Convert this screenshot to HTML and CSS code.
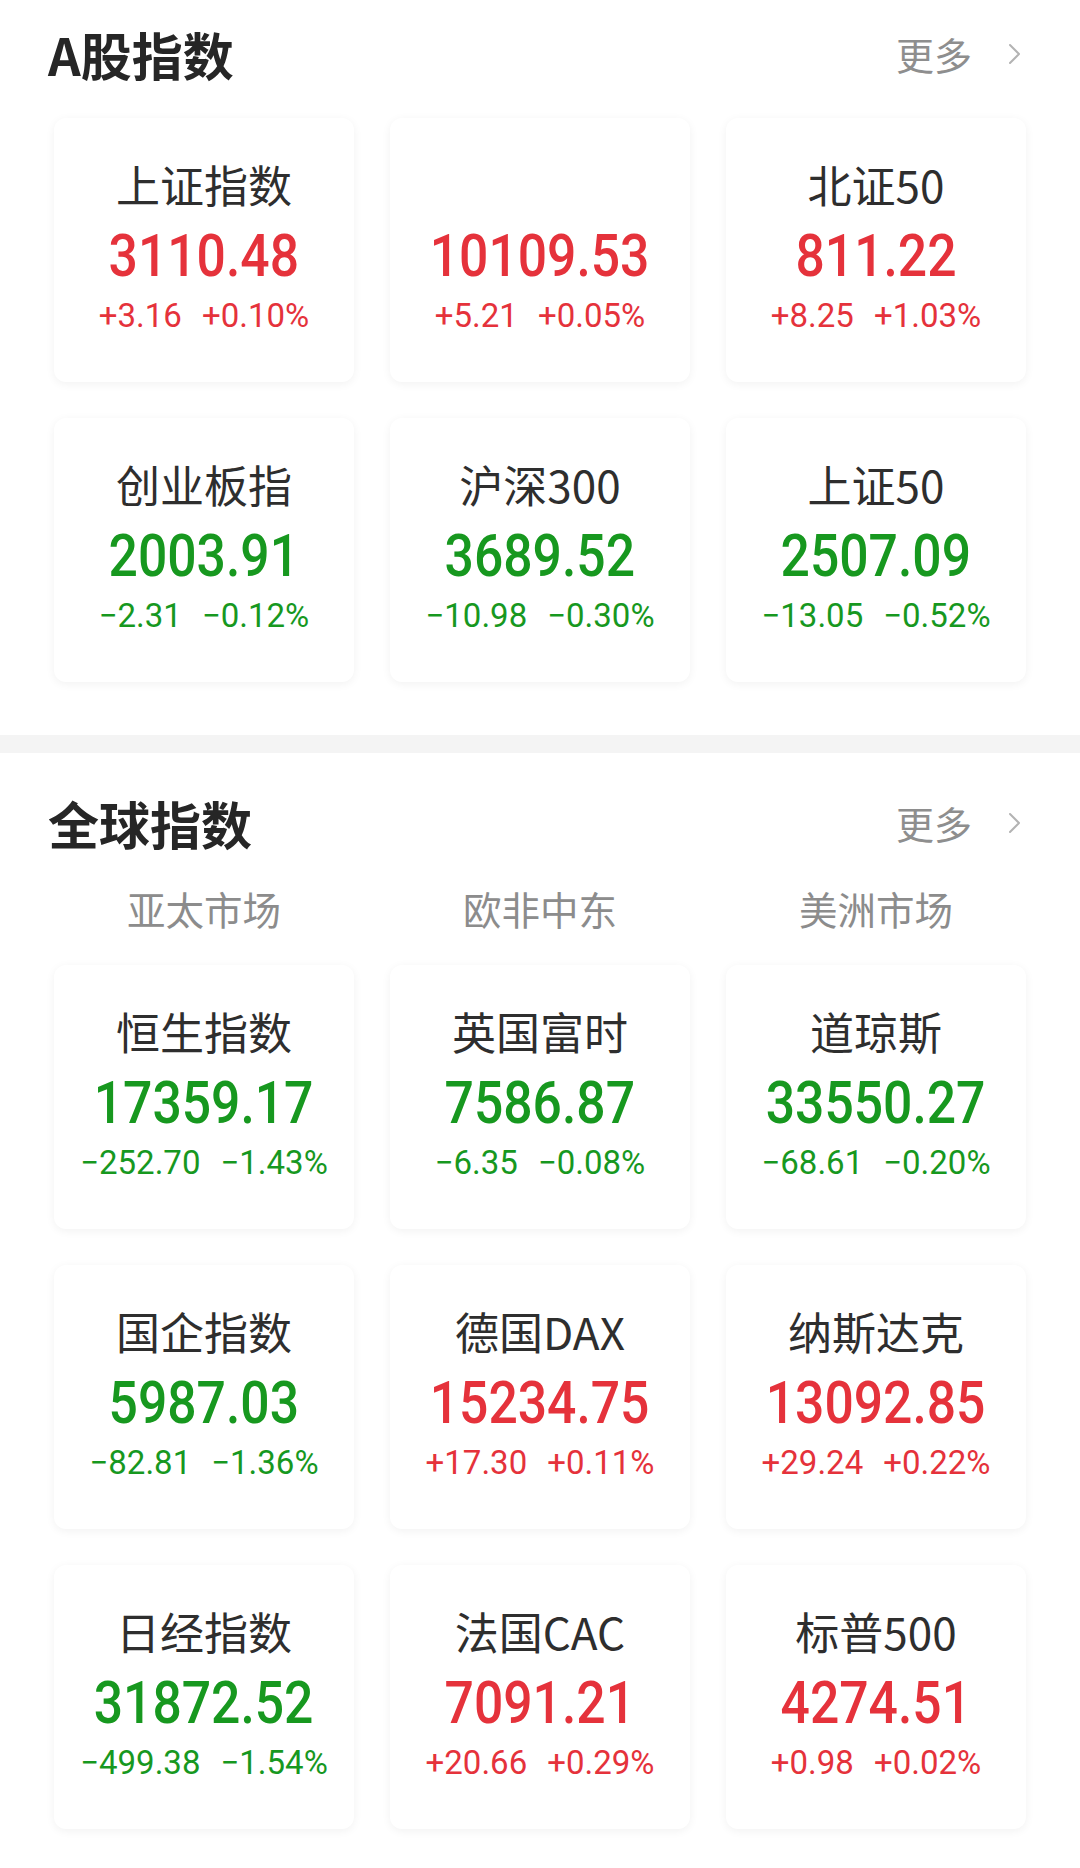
FILE: index.html
```html
<!DOCTYPE html>
<html lang="zh-CN">
<head>
<meta charset="utf-8">
<title>指数</title>
<link rel="stylesheet" href="styles.css">
</head>
<body>
<section class="block block-a">
  <div class="head">
    <h2 class="title">A股指数</h2>
    <a class="more">更多<svg class="chev" viewBox="0 0 14 22" width="14" height="22"><polyline points="2,2 11,11 2,20" fill="none" stroke="#b3b3b3" stroke-width="2" stroke-linecap="round" stroke-linejoin="round"/></svg></a>
  </div>
  <div class="grid">
    <div class="card up"><div class="name">上证指数</div><div class="val"><span>3110.48</span></div><div class="chg"><span>+3.16</span><span>+0.10%</span></div></div>
    <div class="card up"><div class="name"></div><div class="val"><span>10109.53</span></div><div class="chg"><span>+5.21</span><span>+0.05%</span></div></div>
    <div class="card up"><div class="name">北证50</div><div class="val"><span>811.22</span></div><div class="chg"><span>+8.25</span><span>+1.03%</span></div></div>
    <div class="card down"><div class="name">创业板指</div><div class="val"><span>2003.91</span></div><div class="chg"><span>−2.31</span><span>−0.12%</span></div></div>
    <div class="card down"><div class="name">沪深300</div><div class="val"><span>3689.52</span></div><div class="chg"><span>−10.98</span><span>−0.30%</span></div></div>
    <div class="card down"><div class="name">上证50</div><div class="val"><span>2507.09</span></div><div class="chg"><span>−13.05</span><span>−0.52%</span></div></div>
  </div>
</section>
<div class="divider"></div>
<section class="block block-b">
  <div class="head">
    <h2 class="title">全球指数</h2>
    <a class="more">更多<svg class="chev" viewBox="0 0 14 22" width="14" height="22"><polyline points="2,2 11,11 2,20" fill="none" stroke="#b3b3b3" stroke-width="2" stroke-linecap="round" stroke-linejoin="round"/></svg></a>
  </div>
  <div class="tabs">
    <div class="tab">亚太市场</div>
    <div class="tab">欧非中东</div>
    <div class="tab">美洲市场</div>
  </div>
  <div class="grid">
    <div class="card down"><div class="name">恒生指数</div><div class="val"><span>17359.17</span></div><div class="chg"><span>−252.70</span><span>−1.43%</span></div></div>
    <div class="card down"><div class="name">英国富时</div><div class="val"><span>7586.87</span></div><div class="chg"><span>−6.35</span><span>−0.08%</span></div></div>
    <div class="card down"><div class="name">道琼斯</div><div class="val"><span>33550.27</span></div><div class="chg"><span>−68.61</span><span>−0.20%</span></div></div>
    <div class="card down"><div class="name">国企指数</div><div class="val"><span>5987.03</span></div><div class="chg"><span>−82.81</span><span>−1.36%</span></div></div>
    <div class="card up"><div class="name">德国DAX</div><div class="val"><span>15234.75</span></div><div class="chg"><span>+17.30</span><span>+0.11%</span></div></div>
    <div class="card up"><div class="name">纳斯达克</div><div class="val"><span>13092.85</span></div><div class="chg"><span>+29.24</span><span>+0.22%</span></div></div>
    <div class="card down"><div class="name">日经指数</div><div class="val"><span>31872.52</span></div><div class="chg"><span>−499.38</span><span>−1.54%</span></div></div>
    <div class="card up"><div class="name">法国CAC</div><div class="val"><span>7091.21</span></div><div class="chg"><span>+20.66</span><span>+0.29%</span></div></div>
    <div class="card up"><div class="name">标普500</div><div class="val"><span>4274.51</span></div><div class="chg"><span>+0.98</span><span>+0.02%</span></div></div>
  </div>
</section>
</body>
</html>
```

FILE: styles.css
```css
* { box-sizing: border-box; }
html, body {
  margin: 0;
  padding: 0;
  background: #ffffff;
}
body {
  width: 1080px;
  font-family: "Noto Sans CJK SC", "Noto Sans", sans-serif;
  color: #333333;
}
.block-a {
  padding-top: 29px;
  padding-bottom: 53px;
}
.block-b {
  padding-top: 45px;
  padding-bottom: 38px;
}
.head {
  display: flex;
  align-items: center;
  justify-content: space-between;
  height: 50px;
  padding-left: 48px;
  padding-right: 58px;
}
.title {
  margin: 0;
  font-size: 51px;
  line-height: 50px;
  font-weight: 700;
  color: #262626;
}
.more {
  display: flex;
  align-items: center;
  font-size: 38px;
  line-height: 50px;
  color: #8e8e8e;
}
.chev {
  margin-left: 36px;
  display: block;
}
.grid {
  display: grid;
  grid-template-columns: repeat(3, 300px);
  grid-auto-rows: 264px;
  column-gap: 36px;
  row-gap: 36px;
  padding-left: 54px;
}
.block-a .grid { margin-top: 39px; }
.block-b .grid { margin-top: 35px; }
.tabs {
  display: grid;
  grid-template-columns: repeat(3, 300px);
  column-gap: 36px;
  padding-left: 54px;
  margin-top: 38px;
}
.tab {
  text-align: center;
  font-size: 38.5px;
  line-height: 44px;
  color: #8c8c8c;
}
.card {
  background: #ffffff;
  border-radius: 12px;
  box-shadow: 0 2px 10px rgba(0, 0, 0, 0.055);
  display: flex;
  flex-direction: column;
  align-items: center;
  padding-top: 41px;
}
.name {
  height: 50px;
  font-size: 44px;
  line-height: 50px;
  color: #2e2e2e;
  white-space: nowrap;
}
.val {
  margin-top: 9px;
  height: 76px;
  line-height: 76px;
  font-family: "Roboto", "Liberation Sans", sans-serif;
  font-weight: 500;
  font-size: 59px;
  white-space: nowrap;
}
.val span {
  display: inline-block;
  transform: scaleX(0.875);
}
.chg {
  display: flex;
  gap: 20px;
  height: 44px;
  line-height: 44px;
  font-family: "Roboto", "Liberation Sans", sans-serif;
  font-size: 33px;
  white-space: nowrap;
}
.up .val, .up .chg { color: #e5323b; }
.down .val, .down .chg { color: #17981f; }
.divider {
  height: 18px;
  background: #f4f4f4;
}
```
